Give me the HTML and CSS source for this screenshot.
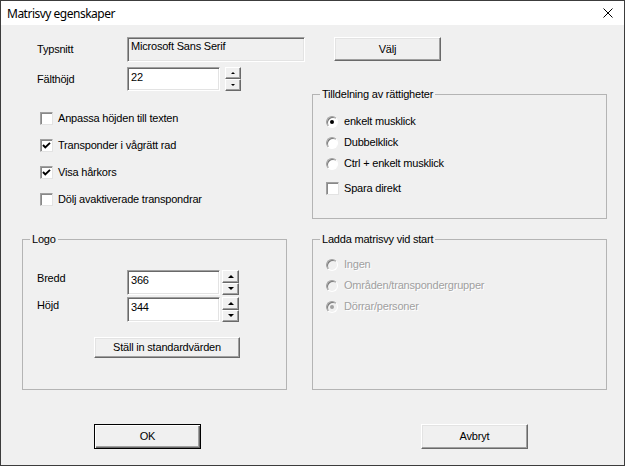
FILE: index.html
```html
<!DOCTYPE html>
<html>
<head>
    <meta charset="UTF-8">
    <title>Matrisvy egenskaper</title>
    <link rel="stylesheet" href="styles.css">
</head>
<body>
<div class="window">
    <!-- Title bar -->
    <div class="titlebar">
        <span class="title">Matrisvy egenskaper</span>
        <svg class="close" viewBox="0 0 10 10"><path d="M0.5 0.5L9.5 9.5M9.5 0.5L0.5 9.5" stroke="#000" stroke-width="1" fill="none"/></svg>
    </div>

    <div class="client">
        <!-- Font, height and display options -->
        <div class="top">
            <div class="left-col">
                <div class="row row-font">
                    <span class="label">Typsnitt</span>
                    <div class="field field-font">Microsoft Sans Serif</div>
                </div>
                <div class="row row-height">
                    <span class="label">Fälthöjd</span>
                    <div class="field field-num">22</div>
                    <div class="spinner spinner-small">
                        <div class="spin up"></div>
                        <div class="spin down"></div>
                    </div>
                </div>
                <div class="checks">
                    <div class="check"><span class="box"></span>Anpassa höjden till texten</div>
                    <div class="check"><span class="box"><svg viewBox="0 0 11 11"><path d="M2 5L4.3 7.5L9 2.8" stroke="#000" stroke-width="1.9" fill="none"/></svg></span>Transponder i vågrätt rad</div>
                    <div class="check"><span class="box"><svg viewBox="0 0 11 11"><path d="M2 5L4.3 7.5L9 2.8" stroke="#000" stroke-width="1.9" fill="none"/></svg></span>Visa hårkors</div>
                    <div class="check"><span class="box"></span>Dölj avaktiverade transpondrar</div>
                </div>
            </div>

            <div class="right-col">
                <button class="btn btn-choose">Välj</button>
                <div class="group rights">
                    <span class="legend">Tilldelning av rättigheter</span>
                    <div class="option"><span class="radio checked"></span>enkelt musklick</div>
                    <div class="option"><span class="radio"></span>Dubbelklick</div>
                    <div class="option"><span class="radio"></span>Ctrl + enkelt musklick</div>
                    <div class="option option-check"><span class="box"></span>Spara direkt</div>
                </div>
            </div>
        </div>

        <!-- Logo size and startup view -->
        <div class="middle">
            <div class="group logo">
                <span class="legend">Logo</span>
                <div class="row">
                    <span class="label label-top">Bredd</span>
                    <div class="field field-num tall">366</div>
                    <div class="spinner">
                        <div class="spin up"></div>
                        <div class="spin down"></div>
                    </div>
                </div>
                <div class="row row-second">
                    <span class="label label-top">Höjd</span>
                    <div class="field field-num tall">344</div>
                    <div class="spinner">
                        <div class="spin up"></div>
                        <div class="spin down"></div>
                    </div>
                </div>
                <button class="btn btn-reset">Ställ in standardvärden</button>
            </div>

            <div class="group startup">
                <span class="legend">Ladda matrisvy vid start</span>
                <div class="option disabled"><span class="radio"></span>Ingen</div>
                <div class="option disabled"><span class="radio"></span>Områden/transpondergrupper</div>
                <div class="option disabled"><span class="radio checked"></span>Dörrar/personer</div>
            </div>
        </div>

        <!-- Dialog buttons -->
        <div class="footer">
            <button class="btn btn-default btn-ok">OK</button>
            <button class="btn btn-cancel">Avbryt</button>
        </div>
    </div>
</div>
</body>
</html>
```

FILE: styles.css
```css
* {
    box-sizing: border-box;
}

html, body {
    height: 100%;
    margin: 0;
    overflow: hidden;
    background: #f0f0f0;
}

/* Dialog frame */
.window {
    width: 625px;
    height: 466px;
    border: 1px solid #3c3c3c;
    background: #f0f0f0;
    display: flex;
    flex-direction: column;
    font-family: "Liberation Sans", Arial, sans-serif;
    font-size: 11px;
    letter-spacing: -0.2px;
    line-height: 13px;
    color: #000;
}

.titlebar {
    height: 24px;
    flex-shrink: 0;
    background: #fff;
    display: flex;
    align-items: center;
    justify-content: space-between;
    padding: 0 11px 0 6px;
}

.title {
    font-family: "Noto Sans", sans-serif;
    font-size: 12px;
    letter-spacing: -0.5px;
}

.close {
    width: 10px;
    height: 10px;
}

.client {
    flex: 1;
    padding: 12px 17px 0 21px;
}

/* Top part */
.top {
    display: flex;
    align-items: flex-start;
}

.left-col {
    width: 290px;
}

.right-col {
    width: 295px;
}

.row {
    display: flex;
    align-items: center;
}

.left-col .row {
    padding-left: 15px;
}

.label {
    width: 90px;
}

.label-top {
    align-self: flex-start;
    padding-top: 2px;
}

.row-font {
    height: 25px;
}

.row-height {
    height: 24px;
    margin-top: 5px;
}

/* Sunken text fields */
.field {
    height: 24px;
    border: 1px solid;
    border-color: #a0a0a0 #fff #fff #a0a0a0;
    box-shadow: inset 1px 1px #696969, inset -1px -1px #e3e3e3;
    background: #fff;
    padding: 3px 3px 0;
}

.field-font {
    width: 178px;
    height: 25px;
    background: #f0f0f0;
    padding-top: 2px;
}

.field-num {
    width: 93px;
}

.field-num.tall {
    height: 25px;
}

/* Up/down buttons */
.spinner {
    display: flex;
    flex-direction: column;
    width: 17px;
    height: 25px;
    margin-left: 2px;
}

.spinner-small {
    width: 16px;
    height: 24px;
    margin-left: 5px;
}

.spin {
    flex: 1;
    background: #f0f0f0;
    border: 1px solid;
    border-color: #fff #696969 #696969 #fff;
    box-shadow: inset -1px -1px #a0a0a0;
    display: flex;
    align-items: center;
    justify-content: center;
}

.spin::before {
    content: "";
    border-left: 3px solid transparent;
    border-right: 3px solid transparent;
    border-bottom: 3px solid #000;
}

.spin.down::before {
    border-bottom: 0;
    border-top: 3px solid #000;
}

.spinner-small .spin::before {
    border-left-width: 2px;
    border-right-width: 2px;
    border-bottom-width: 2px;
}

.spinner-small .spin.down::before {
    border-bottom-width: 0;
    border-top-width: 2px;
}

/* Check boxes */
.checks {
    margin-top: 14px;
    padding-left: 18px;
}

.check {
    display: flex;
    align-items: center;
    height: 27px;
}

.box {
    width: 13px;
    height: 13px;
    flex-shrink: 0;
    margin-right: 5px;
    border: 1px solid;
    border-color: #a0a0a0 #e3e3e3 #e3e3e3 #a0a0a0;
    box-shadow: inset 1px 1px #888;
    background: #fff;
    display: flex;
}

.box svg {
    width: 11px;
    height: 11px;
}

/* Radio buttons */
.radio {
    width: 12px;
    height: 12px;
    flex-shrink: 0;
    margin-right: 6px;
    border-radius: 50%;
    border: 1px solid;
    border-color: #a0a0a0 #fff #fff #a0a0a0;
    box-shadow: inset 1px 1px #7a7a7a;
    background: #fff;
    display: flex;
    align-items: center;
    justify-content: center;
}

.radio.checked::before {
    content: "";
    width: 4px;
    height: 4px;
    border-radius: 50%;
    background: #000;
}

.option {
    display: flex;
    align-items: center;
    height: 21px;
}

.option-check {
    margin-top: 4px;
}

.option.disabled {
    color: #a0a0a0;
    text-shadow: 1px 1px 0 #fff;
}

.option.disabled .radio {
    background: #f0f0f0;
}

.option.disabled .radio.checked::before {
    background: #a0a0a0;
}

/* Group boxes */
.group {
    position: relative;
    border: 1px solid #b4b4b4;
}

.legend {
    position: absolute;
    top: -7px;
    left: 7px;
    padding: 0 2px;
    background: #f0f0f0;
}

.rights {
    margin-top: 33px;
    height: 125px;
    padding: 16px 0 0 13px;
}

.middle {
    display: flex;
    margin-top: 20px;
}

.logo {
    width: 265px;
    height: 151px;
    padding: 30px 0 0 14px;
}

.row-second {
    margin-top: 2px;
}

.startup {
    width: 295px;
    height: 151px;
    margin-left: 25px;
    padding: 14px 0 0 13px;
}

/* Push buttons */
.btn {
    display: block;
    font: inherit;
    letter-spacing: inherit;
    color: #000;
    background: #f0f0f0;
    border: 1px solid;
    border-color: #fff #696969 #696969 #fff;
    box-shadow: inset -1px -1px #a0a0a0, inset 1px 1px #e3e3e3;
    padding: 0;
}

.btn-default {
    border: 1px solid #000;
    box-shadow: inset 1px 1px #fff, inset -1px -1px #696969, inset -2px -2px #a0a0a0;
}

.btn-choose {
    width: 107px;
    height: 24px;
    margin-left: 22px;
}

.btn-reset {
    width: 146px;
    height: 21px;
    margin: 15px 0 0 57px;
}

.footer {
    display: flex;
    margin-top: 34px;
}

.btn-ok {
    width: 107px;
    height: 25px;
    margin-left: 72px;
}

.btn-cancel {
    width: 107px;
    height: 25px;
    margin-left: 220px;
}
```
